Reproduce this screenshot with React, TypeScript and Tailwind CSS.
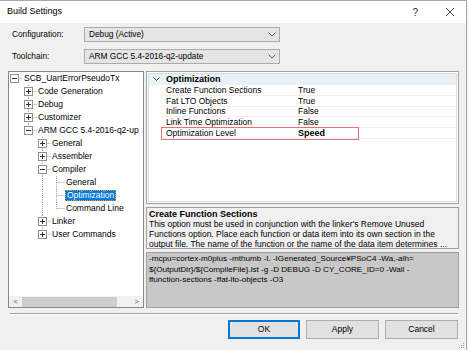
import React from 'react';

type Box = 'plus' | 'minus' | undefined;

function Cell({ full, up, down, right, box }: { full?: boolean; up?: boolean; down?: boolean; right?: boolean; box?: Box }) {
  const c = '#a0a0a0';
  return (
    <svg width="14" height="13" className="shrink-0 block">
      {full && <line x1="5.5" y1="0" x2="5.5" y2="13" stroke={c} strokeDasharray="1 1" />}
      {up && <line x1="5.5" y1="0" x2="5.5" y2="6.5" stroke={c} strokeDasharray="1 1" />}
      {down && <line x1="5.5" y1="6.5" x2="5.5" y2="13" stroke={c} strokeDasharray="1 1" />}
      {right && <line x1="5.5" y1="6.5" x2="14" y2="6.5" stroke={c} strokeDasharray="1 1" />}
      {box && (
        <g>
          <rect x="1.5" y="2.5" width="8" height="8" fill="#ffffff" stroke="#919191" />
          <line x1="3" y1="6.5" x2="8" y2="6.5" stroke="#333333" />
          {box === 'plus' && <line x1="5.5" y1="4" x2="5.5" y2="9" stroke="#333333" />}
        </g>
      )}
    </svg>
  );
}

type Row = {
  label: string;
  level: number;
  guides: boolean[];
  up: boolean;
  down: boolean;
  box?: Box;
  selected?: boolean;
};

const rows: Row[] = [
  { label: 'SCB_UartErrorPseudoTx', level: 0, guides: [], up: false, down: false, box: 'minus' },
  { label: 'Code Generation', level: 1, guides: [false], up: true, down: true, box: 'plus' },
  { label: 'Debug', level: 1, guides: [false], up: true, down: true, box: 'plus' },
  { label: 'Customizer', level: 1, guides: [false], up: true, down: true, box: 'plus' },
  { label: 'ARM GCC 5.4-2016-q2-up', level: 1, guides: [false], up: true, down: false, box: 'minus' },
  { label: 'General', level: 2, guides: [false, false], up: true, down: true, box: 'plus' },
  { label: 'Assembler', level: 2, guides: [false, false], up: true, down: true, box: 'plus' },
  { label: 'Compiler', level: 2, guides: [false, false], up: true, down: true, box: 'minus' },
  { label: 'General', level: 3, guides: [false, false, true], up: true, down: true },
  { label: 'Optimization', level: 3, guides: [false, false, true], up: true, down: true, selected: true },
  { label: 'Command Line', level: 3, guides: [false, false, true], up: true, down: false },
  { label: 'Linker', level: 2, guides: [false, false], up: true, down: true, box: 'plus' },
  { label: 'User Commands', level: 2, guides: [false, false], up: true, down: false, box: 'plus' },
];

function TreeRow({ r }: { r: Row }) {
  return (
    <div className="flex h-[13px] items-center">
      {r.guides.map((g, i) => (
        <Cell key={i} full={g} />
      ))}
      <Cell up={r.up} down={r.down} right box={r.box} />
      {r.selected ? (
        <span className="h-[11px] px-[1px] bg-[#0078d7] text-white leading-[9px] border border-dotted border-[#d9a04a] whitespace-nowrap">
          {r.label}
        </span>
      ) : (
        <span className="ml-[1px] leading-[13px] whitespace-nowrap">{r.label}</span>
      )}
    </div>
  );
}

function Chevron() {
  return (
    <svg width="8" height="5" className="block">
      <polyline points="0.5,0.5 4,4 7.5,0.5" fill="none" stroke="#606060" strokeWidth="1" />
    </svg>
  );
}

const props = [
  { k: 'Create Function Sections', v: 'True' },
  { k: 'Fat LTO Objects', v: 'True' },
  { k: 'Inline Functions', v: 'False' },
  { k: 'Link Time Optimization', v: 'False' },
];

export default function App() {
  return (
    <div className="w-[469px] h-[350px] bg-[#f8f8f8] font-['Liberation_Sans',Arial,sans-serif] text-black overflow-hidden">
      <div className="w-[467px] h-[350px] bg-[#f0f0f0] border-r border-t border-[#a8a8a8] flex flex-col">
        {/* title bar */}
        <div className="h-[22px] bg-white flex items-center pl-[7px] shrink-0">
          <span className="text-[9px]">Build Settings</span>
          <span className="ml-auto text-[10px] text-[#333] mr-[27px]">?</span>
          <svg width="10" height="10" className="mr-[11px]">
            <line x1="1" y1="1" x2="9" y2="9" stroke="#333" strokeWidth="0.9" />
            <line x1="9" y1="1" x2="1" y2="9" stroke="#333" strokeWidth="0.9" />
          </svg>
        </div>

        {/* config rows */}
        <div className="flex items-center mt-[4px] h-[15px] shrink-0">
          <span className="ml-[12px] w-[72px] text-[8.3px]">Configuration:</span>
          <div className="w-[196px] h-[15px] bg-[#e5e5e5] border border-[#acacac] flex items-center pl-[4px] pr-[3px]">
            <span className="text-[8.3px]">Debug (Active)</span>
            <span className="ml-auto"><Chevron /></span>
          </div>
        </div>
        <div className="flex items-center mt-[7px] h-[15px] shrink-0">
          <span className="ml-[12px] w-[72px] text-[8.3px]">Toolchain:</span>
          <div className="w-[196px] h-[15px] bg-[#e5e5e5] border border-[#acacac] flex items-center pl-[4px] pr-[3px]">
            <span className="text-[8.3px]">ARM GCC 5.4-2016-q2-update</span>
            <span className="ml-auto"><Chevron /></span>
          </div>
        </div>

        {/* main area */}
        <div className="flex mt-[7px] ml-[8px] h-[237px] shrink-0">
          {/* tree */}
          <div className="w-[136px] h-full border border-[#828790] bg-white flex flex-col">
            <div className="flex-1 text-[8.5px] overflow-hidden">
              {rows.map((r, i) => (
                <TreeRow key={i} r={r} />
              ))}
            </div>
            <div className="h-[11px] bg-[#f0f0f0] flex items-center text-[8px] text-[#606060]">
              <span className="w-[13px] text-center">&lt;</span>
              <div className="w-[95px] h-[10px] bg-[#cdcdcd]" />
              <span className="ml-auto w-[13px] text-center">&gt;</span>
            </div>
          </div>

          {/* right column */}
          <div className="ml-[2px] w-[313px] flex flex-col">
            {/* property grid */}
            <div className="h-[133px] border border-[#a0a0a0] bg-white p-[1px] shrink-0">
              <div className="h-full border border-[#dcdcdc] bg-white text-[8.5px]">
                <div className="h-[11px] bg-[#ebf1f9] flex items-center">
                  <span className="ml-[4px] w-[13px]">
                    <svg width="7" height="5" className="block">
                      <polyline points="0.5,0.5 3.5,3.5 6.5,0.5" fill="none" stroke="#404040" strokeWidth="1" />
                    </svg>
                  </span>
                  <span className="font-bold text-[9px] leading-[11px]">Optimization</span>
                </div>
                <div className="pl-[12px]">
                  {props.map((p) => (
                    <div key={p.k} className="h-[10.75px] flex items-center border-b border-[#f0f0f0]">
                      <span className="pl-[5px] w-[137px] whitespace-nowrap leading-[10px]">{p.k}</span>
                      <span className="leading-[10px]">{p.v}</span>
                    </div>
                  ))}
                  <div className="relative h-[10.75px] flex items-center border-b border-[#f0f0f0]">
                    <span className="pl-[5px] w-[137px] whitespace-nowrap leading-[10px]">Optimization Level</span>
                    <span className="leading-[10px] font-bold text-[9px]">Speed</span>
                    <div className="absolute left-0 top-[-1px] w-[198px] h-[13px] border border-[#e57373]" />
                  </div>
                </div>
              </div>
            </div>

            {/* description */}
            <div className="mt-[3px] h-[42px] border border-[#a0a0a0] bg-[#f0f0f0] pl-[2px] pt-[1px] overflow-hidden shrink-0">
              <div className="font-bold text-[9px] leading-[10px] whitespace-nowrap">Create Function Sections</div>
              <div className="text-[8.5px] leading-[10px] whitespace-nowrap">This option must be used in conjunction with the linker's Remove Unused</div>
              <div className="text-[8.5px] leading-[10px] whitespace-nowrap">Functions option. Place each function or data item into its own section in the</div>
              <div className="text-[8.5px] leading-[10px] whitespace-nowrap">output file. The name of the function or the name of the data item determines ...</div>
            </div>

            {/* command line */}
            <div className="mt-[3px] flex-1 border border-[#a0a0a0] bg-[#c8c8c8] pl-[2px] pt-[1px] text-[8.1px] leading-[10.5px] overflow-hidden">
              <div className="whitespace-nowrap">-mcpu=cortex-m0plus -mthumb -I. -IGenerated_Source¥PSoC4 -Wa,-alh=</div>
              <div className="whitespace-nowrap">{'${OutputDir}/${CompileFile}.lst -g -D DEBUG -D CY_CORE_ID=0 -Wall -'}</div>
              <div className="whitespace-nowrap">ffunction-sections -ffat-lto-objects -O3</div>
            </div>
          </div>
        </div>

        {/* separator */}
        <div className="mt-[5px] ml-[10px] w-[448px] h-[2px] border-t border-[#a0a0a0] border-b border-b-white shrink-0" />

        {/* buttons */}
        <div className="mt-[5px] flex justify-end gap-[6px] pr-[8px] shrink-0">
          <button className="w-[72px] h-[19px] bg-[#e1e1e1] border border-[#0078d7] outline outline-1 outline-[#0078d7] -outline-offset-2 text-[8.5px]">OK</button>
          <button className="w-[73px] h-[19px] bg-[#e1e1e1] border border-[#adadad] text-[8.5px]">Apply</button>
          <button className="w-[73px] h-[19px] bg-[#e1e1e1] border border-[#adadad] text-[8.5px]">Cancel</button>
        </div>

        <div className="flex-1 flex justify-end items-end pr-[1px] pb-[1px]">
          <svg width="7" height="7" className="block">
            <rect x="5" y="1" width="1" height="1" fill="#a0a0a0" />
            <rect x="3" y="3" width="1" height="1" fill="#a0a0a0" />
            <rect x="5" y="3" width="1" height="1" fill="#a0a0a0" />
            <rect x="1" y="5" width="1" height="1" fill="#a0a0a0" />
            <rect x="3" y="5" width="1" height="1" fill="#a0a0a0" />
            <rect x="5" y="5" width="1" height="1" fill="#a0a0a0" />
          </svg>
        </div>
      </div>
    </div>
  );
}
